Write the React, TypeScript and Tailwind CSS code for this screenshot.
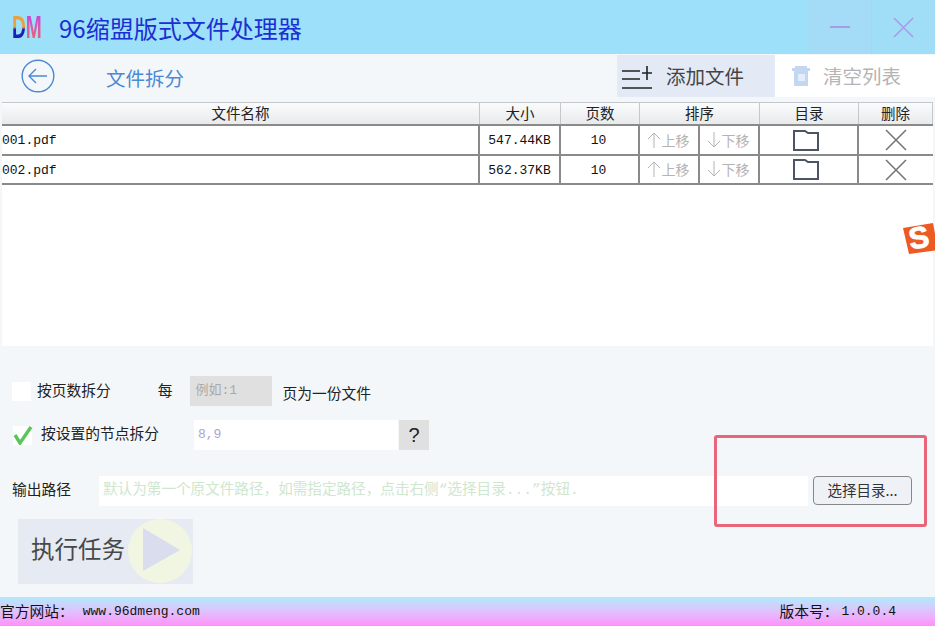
const cjk = 'font-["Noto_Sans_CJK_SC",sans-serif]';
const mono = 'font-["Liberation_Mono","Noto_Sans_CJK_SC",monospace]';

const tableCols = 'grid grid-cols-[478px_81px_79px_60px_60px_99px_74px]';

const files = [
  { name: '001.pdf', size: '547.44KB', pages: '10', height: 'h-[30px]' },
  { name: '002.pdf', size: '562.37KB', pages: '10', height: 'h-[29px]' },
];

function FolderIcon() {
  return (
    <svg width="26" height="21" viewBox="0 0 26 21" fill="none" className="mr-[5px]">
      <path d="M1 20V1h11l3 2h10v17z" fill="#fff" stroke="#4b5563" strokeWidth="2" />
    </svg>
  );
}

function CrossIcon({ size = 22, color = '#777' }: { size?: number; color?: string }) {
  return (
    <svg width={size} height={size} viewBox="0 0 22 22" fill="none">
      <path d="M1 1l20 20M21 1L1 21" stroke={color} strokeWidth="1.6" />
    </svg>
  );
}

function HeaderCell({ children, span }: { children: React.ReactNode; span?: boolean }) {
  return (
    <div
      className={`flex items-center justify-center border-r border-[#c4c8cc] text-[14.5px] leading-none text-[#222] ${span ? 'col-span-2' : ''}`}
    >
      {children}
    </div>
  );
}

function MoveCell({ arrow, label }: { arrow: 'up' | 'down'; label: string }) {
  return (
    <div className="flex items-center justify-center gap-[1px] border-r-2 border-[#8a8a8a] pb-[1px] pr-[2px] text-[14px] leading-none text-[#b4b4b4]">
      <svg width="14" height="16" viewBox="0 0 14 16" fill="none">
        {arrow === 'up' ? (
          <path d="M7 16V1M1 7l6-6 6 6" stroke="#b4b4b4" strokeWidth="1" />
        ) : (
          <path d="M7 0v15M1 9l6 6 6-6" stroke="#b4b4b4" strokeWidth="1" />
        )}
      </svg>
      {label}
    </div>
  );
}

function FileRow({ name, size, pages, height }: { name: string; size: string; pages: string; height: string }) {
  return (
    <div className={`${tableCols} ${height} border-b-2 border-[#8a8a8a] bg-white`}>
      <div className={`flex items-center border-r-2 border-[#8a8a8a] pt-[2px] text-[13px] text-[#111] ${mono}`}>{name}</div>
      <div className={`flex items-center justify-center border-r-2 border-[#8a8a8a] pt-[2px] text-[13px] text-[#111] ${mono}`}>{size}</div>
      <div className={`flex items-center justify-center border-r-2 border-[#8a8a8a] pt-[2px] pr-[2px] text-[13px] text-[#111] ${mono}`}>{pages}</div>
      <MoveCell arrow="up" label="上移" />
      <MoveCell arrow="down" label="下移" />
      <div className="flex items-center justify-center border-r-2 border-[#8a8a8a]">
        <FolderIcon />
      </div>
      <div className="flex items-center justify-center">
        <CrossIcon />
      </div>
    </div>
  );
}

export default function App() {
  return (
    <div className={`relative flex h-[626px] w-[935px] flex-col overflow-hidden bg-[#f4f7f9] ${cjk}`}>
      {/* title bar */}
      <header className="flex h-[54px] items-center bg-[#9ce0f9]">
        <div className="ml-[12px] flex w-[47px]">
          <div className="flex origin-left scale-x-[0.6] text-[32px] leading-none font-bold font-['Liberation_Sans',sans-serif]">
            <span className="bg-[linear-gradient(#e8a040_50%,#1820c0_58%)] bg-clip-text text-transparent">D</span>
            <span className="bg-gradient-to-b from-[#c838f0] to-[#f06050] bg-clip-text text-transparent">M</span>
          </div>
        </div>
        <h1 className="mt-[2px] flex-1 text-[24px] leading-none font-normal text-[#1b2fd2]">96缩盟版式文件处理器</h1>
        <div className="flex h-full w-[63px] items-center justify-center bg-[#a4dcf7]">
          <div className="-mt-[1px] h-[2px] w-[20px] bg-[#a99be8]" />
        </div>
        <div className="flex h-full w-[64px] items-center justify-center border-l border-[#9fd8f2] bg-[#a0def8]">
          <CrossIcon size={21} color="#a99be8" />
        </div>
      </header>

      {/* toolbar */}
      <div className="flex h-[48px] items-start">
        <div className="flex h-full flex-1 items-center pl-[21px]">
          <svg width="34" height="34" viewBox="0 0 34 34" fill="none" className="-mt-[4px]">
            <circle cx="17" cy="17" r="15.8" stroke="#4a8ad4" strokeWidth="1.4" />
            <path d="M26 17H8M15 10l-7 7 7 7" stroke="#4a8ad4" strokeWidth="1.4" />
          </svg>
          <span className="-mt-[1px] ml-[51px] text-[19.5px] leading-none text-[#4a8ad4]">文件拆分</span>
        </div>
        <button className="mt-[1px] flex h-[42px] w-[158px] items-center bg-[#e3eaf5] pl-[5px]">
          <svg width="30" height="24" viewBox="0 0 30 24" fill="none" className="mt-[2px]">
            <path d="M0 6h18M0 14h18M0 23h30M25 1v14M20 8h10" stroke="#222" strokeWidth="1.6" />
          </svg>
          <span className="ml-[14px] text-[19.5px] leading-none text-[#444]">添加文件</span>
        </button>
        <button className="mt-[1px] flex h-[42px] w-[160px] items-center bg-white pl-[17px]">
          <svg width="18" height="20" viewBox="0 0 18 20" fill="none">
            <path d="M3 0h12v2h3v3H0V2h3zM2 5h14v15H2z" fill="#c3d7f0" />
            <rect x="6" y="8" width="7" height="7" fill="#e4eefa" />
          </svg>
          <span className="ml-[13px] text-[19.5px] leading-none text-[#b4b4b4]">清空列表</span>
        </button>
      </div>

      {/* file table */}
      <div className="ml-[2px] mr-[2px] flex h-[244px] flex-col bg-white">
        <div className={`${tableCols} h-[24px] border-t border-b-2 border-[#8a8a8a] border-t-[#c4c8cc] bg-gradient-to-b from-[#fafbfc] to-[#e8eaec]`}>
          <HeaderCell>文件名称</HeaderCell>
          <HeaderCell>大小</HeaderCell>
          <HeaderCell>页数</HeaderCell>
          <HeaderCell span>排序</HeaderCell>
          <HeaderCell>目录</HeaderCell>
          <HeaderCell>删除</HeaderCell>
        </div>
        {files.map((f) => (
          <FileRow key={f.name} name={f.name} size={f.size} pages={f.pages} height={f.height} />
        ))}
      </div>

      {/* split options */}
      <div className="flex h-[251px] flex-col text-[14.75px] text-[#222]">
        <div className="mt-[30px] flex h-[30px] items-center">
          <span className="ml-[12px] h-[19px] w-[19px] bg-white" />
          <span className="ml-[6px] -mt-[2px] leading-none">按页数拆分</span>
          <span className="ml-[47px] -mt-[2px] leading-none">每</span>
          <div className={`ml-[17px] flex h-[30px] w-[82px] items-center bg-[#e0e0e0] pl-[6px] text-[13px] text-[#aaa] ${mono}`}>例如:1</div>
          <span className="ml-[11px] mt-[4px] leading-none">页为一份文件</span>
        </div>

        <div className="mt-[14px] flex h-[30px] items-center">
          <span className="ml-[13px] flex h-[19px] w-[19px] items-center justify-center bg-white">
            <svg width="20" height="19" viewBox="0 0 20 19" fill="none" className="shrink-0">
              <path d="M2 9l5 8L18 1" stroke="#5bc45b" strokeWidth="3.4" />
            </svg>
          </span>
          <span className="ml-[9px] -mt-[3px] leading-none">按设置的节点拆分</span>
          <div className={`ml-[35px] flex h-[30px] w-[204px] items-center bg-white pl-[4px] text-[13px] text-[#a9a5d6] ${mono}`}>8,9</div>
          <button className="ml-[1px] h-[30px] w-[30px] bg-[#e0e0e0] text-[20px] leading-none text-[#222] font-['Liberation_Sans',sans-serif]">?</button>
        </div>

        <div className="mt-[26px] flex h-[30px] items-start">
          <span className="ml-[12px] mt-[6px] w-[87px] leading-none">输出路径</span>
          <div className={`flex h-[30px] w-[709px] items-center overflow-hidden whitespace-nowrap bg-white pl-[4px] text-[14.6px] text-[#cfe6cf] ${mono}`}>
            默认为第一个原文件路径，如需指定路径，点击右侧“选择目录...”按钮.
          </div>
          <button className="ml-[5px] h-[29px] w-[99px] rounded-[4px] border border-[#888] bg-[#eef1f5] text-[14.5px] leading-none text-[#333]">
            选择目录...
          </button>
        </div>

        <button className="relative ml-[18px] mt-[13px] flex h-[65px] w-[175px] items-center overflow-hidden bg-[#e6eaf2] pb-[5px] pl-[13px]">
          <span className="text-[23.5px] leading-none text-[#484848]">执行任务</span>
          <svg width="66" height="66" viewBox="0 0 66 66" fill="none" className="absolute left-[109px] top-0">
            <circle cx="33" cy="32" r="32" fill="#f0f6e2" />
            <path d="M16 9l37 22-37 21z" fill="#d9dded" />
          </svg>
        </button>
      </div>

      {/* status bar */}
      <footer className="flex h-[29px] items-center justify-between bg-gradient-to-b from-[#aeeafc] to-[#ff90fc] pr-[39px] text-[14.75px] leading-none text-[#111]">
        <span className={`flex items-center ${mono}`}>
          <span className={cjk}>官方网站：</span>
          <span className="ml-[9px] text-[13px]">www.96dmeng.com</span>
        </span>
        <span className={`flex items-center ${mono}`}>
          <span className={cjk}>版本号：</span>
          <span className="ml-[3px] text-[13px]">1.0.0.4</span>
        </span>
      </footer>

      {/* annotation box over the screenshot */}
      <div className="absolute left-[714px] top-[435px] h-[92px] w-[213px] rounded-[3px] border-[3px] border-[#e9667a]" />

      {/* input method floating badge */}
      <svg width="38" height="36" viewBox="0 0 38 36" className="absolute left-[897px] top-[220px]">
        <path d="M6 8L36 3l5 27L12 34z" fill="#ee5a24" />
        <text x="22" y="28" textAnchor="middle" fontSize="30" fontWeight="700" fill="#fff" stroke="#fff" strokeWidth="1" fontFamily="Liberation Sans" transform="rotate(-10 22 18)">S</text>
      </svg>
    </div>
  );
}
